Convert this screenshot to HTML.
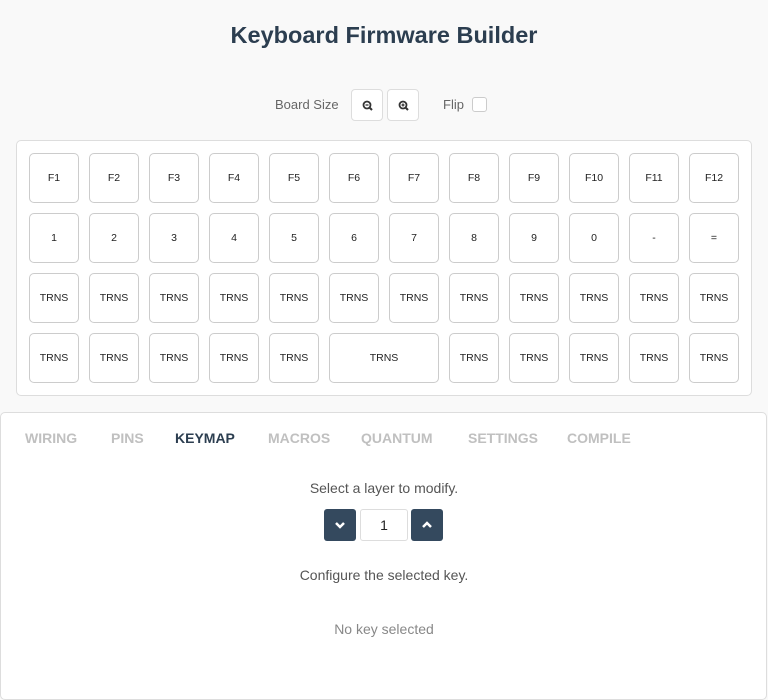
<!DOCTYPE html>
<html><head><meta charset="utf-8"><style>
*{box-sizing:border-box;margin:0;padding:0}
body{width:768px;height:700px;background:#f9f9f9;font-family:"Liberation Sans",sans-serif;position:relative;overflow:hidden;color:#555}
.abs{position:absolute}
h1{position:absolute;top:22px;left:0;width:768px;text-align:center;font-size:23.5px;font-weight:bold;color:#2c3e50}
.kb{position:absolute;left:16px;top:140px;width:736px;height:256px;background:#fff;border:1px solid #ddd;border-radius:5px}
.k{position:absolute;width:50px;height:50px;border:1px solid #ccc;border-radius:5px;background:#fff;font-size:10.5px;color:#222;display:flex;align-items:center;justify-content:center}
.sb{position:absolute;top:89px;width:32px;height:32px;border:1px solid #ddd;border-radius:4px;background:#fff}
.panel{position:absolute;left:0;top:412px;width:767px;height:288px;background:#fff;border:1px solid #ddd;border-radius:5px}
.tab{position:absolute;top:430px;font-size:14px;font-weight:bold;color:#c0c0c0}
.dk{position:absolute;top:509px;width:32px;height:32px;background:#34495e;border-radius:3px}
</style></head><body>
<h1>Keyboard Firmware Builder</h1>
<div class="abs" style="left:275px;top:97px;font-size:13px;color:#666">Board Size</div>
<div class="sb" style="left:351px"><svg width="32" height="32"><circle cx="15" cy="15" r="3.5" fill="none" stroke="#333" stroke-width="1.8"/><line x1="17.5" y1="17.5" x2="20" y2="20" stroke="#333" stroke-width="2"/><line x1="13.5" y1="15" x2="16.5" y2="15" stroke="#333" stroke-width="1.3"/></svg></div>
<div class="sb" style="left:387px"><svg width="32" height="32"><circle cx="15" cy="15" r="3.5" fill="none" stroke="#333" stroke-width="1.8"/><line x1="17.5" y1="17.5" x2="20" y2="20" stroke="#333" stroke-width="2"/><line x1="13.5" y1="15" x2="16.5" y2="15" stroke="#333" stroke-width="1.3"/><line x1="15" y1="13.5" x2="15" y2="16.5" stroke="#333" stroke-width="1.3"/></svg></div>
<div class="abs" style="left:443px;top:97px;font-size:13px;color:#666">Flip</div>
<div class="abs" style="left:472px;top:97px;width:15px;height:15px;border:1px solid #ccc;border-radius:3px;background:#fff"></div>
<div class="kb"></div>
<div id="keys"></div>
<div class="panel"></div>
<div class="tab" style="left:25px">WIRING</div>
<div class="tab" style="left:111px">PINS</div>
<div class="tab" style="left:175px;color:#2c3e50">KEYMAP</div>
<div class="tab" style="left:268px">MACROS</div>
<div class="tab" style="left:361px">QUANTUM</div>
<div class="tab" style="left:468px">SETTINGS</div>
<div class="tab" style="left:567px">COMPILE</div>
<div class="abs" style="left:0;width:768px;top:480px;text-align:center;font-size:14px;color:#555">Select a layer to modify.</div>
<div class="dk" style="left:324px"><svg width="32" height="32"><path d="M12 14l4 4 4-4" fill="none" stroke="#fff" stroke-width="2.5"/></svg></div>
<div class="abs" style="left:360px;top:509px;width:48px;height:32px;border:1px solid #ddd;border-radius:3px;background:#fff;text-align:center;line-height:30px;font-size:14px;color:#222">1</div>
<div class="dk" style="left:411px"><svg width="32" height="32"><path d="M12 18l4-4 4 4" fill="none" stroke="#fff" stroke-width="2.5"/></svg></div>
<div class="abs" style="left:0;width:768px;top:567px;text-align:center;font-size:14px;color:#555">Configure the selected key.</div>
<div class="abs" style="left:0;width:768px;top:621px;text-align:center;font-size:14px;color:#888">No key selected</div>
<script>
var rows=[["F1","F2","F3","F4","F5","F6","F7","F8","F9","F10","F11","F12"],["1","2","3","4","5","6","7","8","9","0","-","="],Array(12).fill("TRNS")];
var h="";
rows.forEach(function(r,ri){r.forEach(function(t,i){h+='<div class="k" style="left:'+(29+60*i)+'px;top:'+(153+60*ri)+'px">'+t+'</div>';});});
var xs=[29,89,149,209,269],y=333;
xs.forEach(function(x){h+='<div class="k" style="left:'+x+'px;top:'+y+'px">TRNS</div>';});
h+='<div class="k" style="left:329px;top:'+y+'px;width:110px">TRNS</div>';
[449,509,569,629,689].forEach(function(x){h+='<div class="k" style="left:'+x+'px;top:'+y+'px">TRNS</div>';});
document.getElementById("keys").innerHTML=h;
</script>
</body></html>
